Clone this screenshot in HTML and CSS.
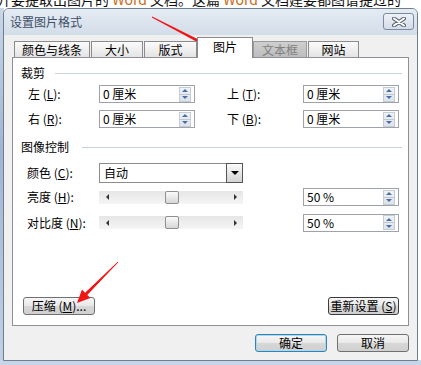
FILE: index.html
```html
<!DOCTYPE html>
<html>
<head>
<meta charset="utf-8">
<link rel="stylesheet" href="styles.css">
</head>
<body>
<div class="screen">
  <div class="doc-text">开要提取出图片的 <span class="w">Word</span> 文档。这篇 <span class="w">Word</span> 文档建要都图谱提过的</div>
  <div class="side-left"></div>
  <div class="side-bottom"></div>
  <div class="dialog">
    <div class="titlebar">
      <span class="title">设置图片格式</span>
      <div class="close">
        <svg width="14" height="10" viewBox="0 0 14 10"><path d="M2 1.5 L12 8.5 M12 1.5 L2 8.5" stroke="#5b6778" stroke-width="4" stroke-linecap="round"/><path d="M2 1.5 L12 8.5 M12 1.5 L2 8.5" stroke="#ffffff" stroke-width="2" stroke-linecap="round"/></svg>
      </div>
    </div>
    <div class="body">
      <div class="tabs">
        <div class="tab w76">颜色与线条</div>
        <div class="tab w52">大小</div>
        <div class="tab w53">版式</div>
        <div class="tab active">图片</div>
        <div class="tab disabled w54">文本框</div>
        <div class="tab w51">网站</div>
      </div>
      <div class="panel">
        <div class="group-title"><span>裁剪</span><i class="rule"></i></div>
        <div class="crop-grid">
          <label>左 (<u>L</u>):</label>
          <div class="field"><span class="val">0 厘米</span><span class="sp"><i class="up"></i><i class="dn"></i></span></div>
          <label class="l2">上 (<u>T</u>):</label>
          <div class="field"><span class="val">0 厘米</span><span class="sp"><i class="up"></i><i class="dn"></i></span></div>
          <label>右 (<u>R</u>):</label>
          <div class="field"><span class="val">0 厘米</span><span class="sp"><i class="up"></i><i class="dn"></i></span></div>
          <label class="l2">下 (<u>B</u>):</label>
          <div class="field"><span class="val">0 厘米</span><span class="sp"><i class="up"></i><i class="dn"></i></span></div>
        </div>
        <div class="group-title g2"><span>图像控制</span><i class="rule"></i></div>
        <div class="img-grid">
          <label>颜色 (<u>C</u>):</label>
          <div class="select"><span class="val">自动</span><span class="dd"></span></div>
          <span></span><span></span>
          <label>亮度 (<u>H</u>):</label>
          <div class="slider"><i class="la"></i><i class="thumb"></i><i class="ra"></i></div>
          <span></span>
          <div class="field"><span class="val">50 %</span><span class="sp"><i class="up"></i><i class="dn"></i></span></div>
          <label>对比度 (<u>N</u>):</label>
          <div class="slider"><i class="la"></i><i class="thumb"></i><i class="ra"></i></div>
          <span></span>
          <div class="field"><span class="val">50 %</span><span class="sp"><i class="up"></i><i class="dn"></i></span></div>
        </div>
        <div class="panel-actions">
          <div class="btn b-compress">压缩 (<u>M</u>)...</div>
          <div class="btn b-reset">重新设置 (<u>S</u>)</div>
        </div>
      </div>
      <div class="dialog-actions">
        <div class="btn b-ok">确定</div>
        <div class="btn b-cancel">取消</div>
      </div>
    </div>
  </div>
  <svg class="arrows" width="421" height="365" viewBox="0 0 421 365">
    <polygon fill="#f01414" points="152.2,16.5 200.0,40.2 201.6,37.1 210,47 197.0,45.9 198.6,42.8 151.8,17.5"/>
    <polygon fill="#f01414" points="117.7,261.7 85.1,292.7 82.0,289.6 77,303 90.4,298.1 87.3,294.9 118.3,262.3"/>
  </svg>
</div>
</body>
</html>
```
FILE: styles.css
```css
html, body {
  margin: 0;
  padding: 0;
}
body {
  font-family: "Noto Sans CJK SC", "Noto Sans", sans-serif;
  font-size: 12px;
  line-height: 14px;
  color: #000;
}
.screen {
  position: relative;
  width: 421px;
  height: 365px;
  overflow: hidden;
  background: #ffffff;
}
.doc-text {
  position: absolute;
  left: -3px;
  top: -9px;
  font-size: 14px;
  line-height: 16px;
  white-space: nowrap;
  color: #111;
}
.doc-text .w {
  color: #c96a18;
}
.side-left {
  position: absolute;
  left: 0;
  top: 8px;
  width: 4px;
  height: 357px;
  background: linear-gradient(#c9d7e8, #9fb5d0 40%, #c2d1e4);
}
.side-bottom {
  position: absolute;
  left: 0;
  top: 360px;
  width: 421px;
  height: 5px;
  background: #c7d6e8;
}
.dialog {
  position: absolute;
  left: 3px;
  top: 8px;
  width: 415px;
  height: 353px;
  box-sizing: border-box;
  border: 1px solid #6f7d8f;
  border-radius: 6px 6px 0 0;
  background: #f0f0f0;
  display: flex;
  flex-direction: column;
  overflow: hidden;
}
.titlebar {
  height: 26px;
  flex: none;
  display: flex;
  align-items: flex-start;
  background: linear-gradient(#e4ebf3, #d3dde9);
}
.title {
  margin: 6px 0 0 6px;
  font-size: 12px;
  line-height: 14px;
  color: #3f4f66;
}
.close {
  margin: 4px 3px 0 auto;
  width: 31px;
  height: 17px;
  box-sizing: border-box;
  border: 1px solid #7b8aa0;
  border-radius: 3px;
  background: linear-gradient(#eef2f7, #d4dce7);
  display: flex;
  align-items: center;
  justify-content: center;
}
.body {
  flex: 1;
  padding: 3px 8px 0 8px;
  display: flex;
  flex-direction: column;
}
.tabs {
  height: 19px;
  display: flex;
  align-items: flex-end;
  padding-left: 2px;
  position: relative;
  z-index: 1;
}
.tab {
  height: 16px;
  box-sizing: border-box;
  border: 1px solid #8b8b8b;
  border-bottom: none;
  background: linear-gradient(#fbfbfb, #e4e4e4);
  display: flex;
  align-items: center;
  justify-content: center;
  margin-right: 1px;
  font-size: 12px;
  line-height: 14px;
}
.w76 { width: 76px; margin-right: 1px; }
.w52 { width: 52px; margin-right: 1px; }
.w53 { width: 53px; margin-right: 0; }
.w54 { width: 54px; }
.w51 { width: 51px; }
.tab.active {
  width: 56px;
  height: 21px;
  margin-bottom: -1px;
  margin-right: 0;
  background: #ffffff;
  border-color: #8b8b8b;
  padding-bottom: 3px;
}
.tab.disabled {
  background: linear-gradient(#cfcfcf, #bdbdbd);
  color: #808080;
  border-color: #9a9a9a;
}
.panel {
  height: 269px;
  box-sizing: border-box;
  border: 1px solid #8d9096;
  background: #ffffff;
  padding: 8px 6px 10px 8px;
  display: flex;
  flex-direction: column;
}
.group-title {
  display: flex;
  align-items: center;
  height: 14px;
}
.group-title .rule {
  flex: 1;
  height: 1px;
  margin-left: 10px;
  background: #c9d3de;
}
.group-title.g2 {
  margin-top: 12px;
}
.group-title.g2 .rule {
  margin-left: 13px;
}
label {
  display: flex;
  align-items: center;
  white-space: nowrap;
}
u {
  text-decoration: underline;
  text-underline-offset: 1px;
}
.crop-grid {
  margin: 5px 0 0 7px;
  display: grid;
  grid-template-columns: 71px 96px 76px 96px;
  column-gap: 0;
  row-gap: 7px;
  grid-auto-rows: 18px;
}
.crop-grid .l2 {
  margin-left: 32px;
  width: 76px;
}
.crop-grid {
  grid-template-columns: 71px 96px 108px 96px;
}
.field {
  height: 18px;
  box-sizing: border-box;
  border: 1px solid #9ea3ab;
  background: #fff;
  display: flex;
  align-items: center;
  padding: 0 3px 0 3px;
}
.field .val {
  flex: 1;
  white-space: nowrap;
}
.sp {
  width: 12px;
  height: 15px;
  box-sizing: border-box;
  border: 1px solid #c5ccd5;
  background: linear-gradient(#f0f3f7, #dde3ea);
  display: flex;
  flex-direction: column;
}
.sp i {
  flex: 1;
  display: flex;
  align-items: center;
  justify-content: center;
}
.sp i + i {
  border-top: 1px solid #c0c7d1;
}
.sp .up::before {
  content: "";
  border-left: 3px solid transparent;
  border-right: 3px solid transparent;
  border-bottom: 3px solid #4b6da8;
}
.sp .dn::before {
  content: "";
  border-left: 3px solid transparent;
  border-right: 3px solid transparent;
  border-top: 3px solid #4b6da8;
}
.img-grid {
  margin: 9px 0 0 6px;
  display: grid;
  grid-template-columns: 72px 144px 60px 96px;
  grid-template-rows: 20px 18px 18px;
  row-gap: 5px;
  align-items: center;
}
.img-grid > :nth-child(n+9) {
  margin-top: 5px;
}
.select {
  grid-column: 2 / 3;
  height: 20px;
  box-sizing: border-box;
  border: 1px solid #8c8c8c;
  background: #fff;
  display: flex;
  align-items: center;
}
.select .val {
  flex: 1;
  padding-left: 4px;
}
.select .dd {
  width: 17px;
  height: 20px;
  margin: -1px -1px -1px 0;
  box-sizing: border-box;
  border: 1px solid #555;
  background: linear-gradient(#fafafa, #d3d3d3);
  display: flex;
  align-items: center;
  justify-content: center;
}
.select .dd::before {
  content: "";
  border-left: 4px solid transparent;
  border-right: 4px solid transparent;
  border-top: 4px solid #000;
}
.slider {
  height: 13px;
  background: linear-gradient(#e6e6e6, #f5f5f5);
  display: flex;
  align-items: center;
}
.slider .la {
  margin-left: 7px;
  border-top: 3px solid transparent;
  border-bottom: 3px solid transparent;
  border-right: 3px solid #333;
}
.slider .thumb {
  margin-left: 56px;
  width: 14px;
  height: 13px;
  box-sizing: border-box;
  border: 1px solid #8f8f8f;
  border-radius: 2px;
  background: linear-gradient(#fbfbfb, #d6d6d6);
}
.slider .ra {
  margin-left: auto;
  margin-right: 6px;
  border-top: 3px solid transparent;
  border-bottom: 3px solid transparent;
  border-left: 3px solid #333;
}
.panel-actions {
  margin-top: auto;
  display: flex;
  justify-content: space-between;
  padding: 0 3px 0 2px;
}
.btn {
  height: 18px;
  box-sizing: border-box;
  border: 1px solid #707070;
  border-radius: 3px;
  background: linear-gradient(#f6f6f6 0%, #e8e8e8 50%, #d7d7d7 51%, #d0d0d0 100%);
  display: flex;
  align-items: center;
  justify-content: center;
  white-space: nowrap;
}
.b-compress {
  width: 72px;
}
.b-reset {
  width: 71px;
  border-color: #3c3c3c;
}
.dialog-actions {
  margin-top: 8px;
  display: flex;
  justify-content: flex-end;
  gap: 10px;
}
.b-ok, .b-cancel {
  width: 72px;
}
.b-ok {
  border-color: #3c7fb1;
  box-shadow: inset 0 0 0 1px #9fdcf5;
}
.arrows {
  position: absolute;
  left: 0;
  top: 0;
  pointer-events: none;
}
```
